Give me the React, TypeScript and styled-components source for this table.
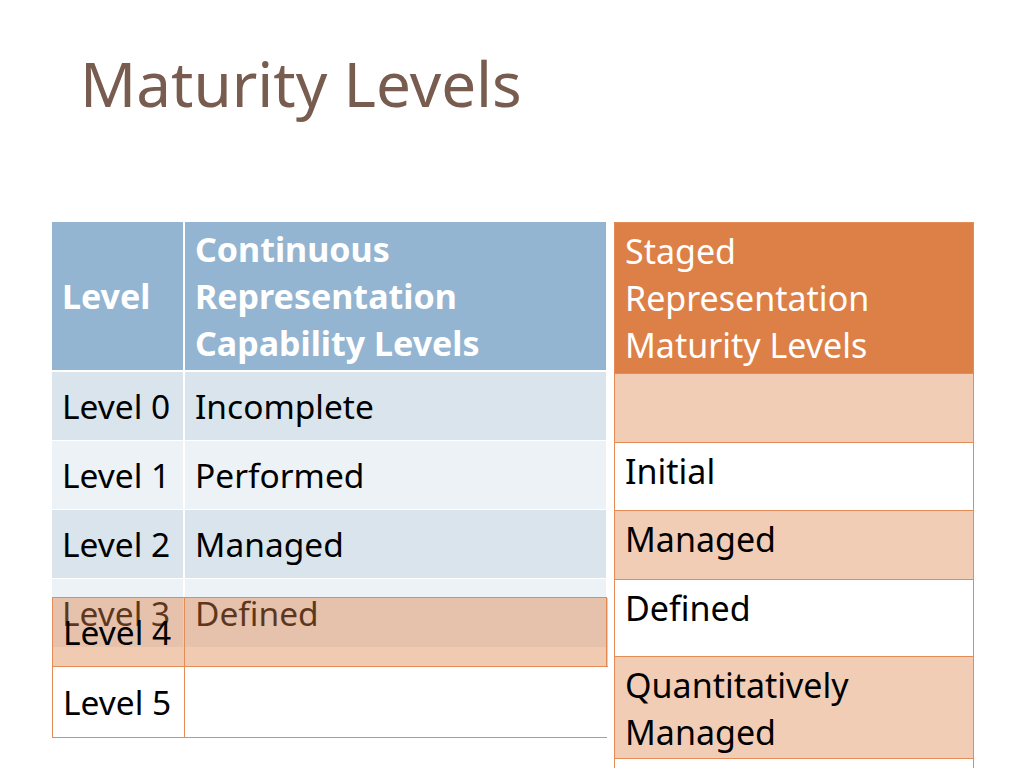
import React from "react";
import styled, { createGlobalStyle } from "styled-components";

const Global = createGlobalStyle`
  html, body { margin: 0; padding: 0; background: #ffffff; }
  body { overflow: hidden; font-family: "Noto Sans", "Open Sans", sans-serif; }
`;

const Slide = styled.div`
  position: relative;
  width: 1024px;
  height: 768px;
  overflow: hidden;
  background: #ffffff;
`;

const Title = styled.h1`
  margin: 0;
  padding: 47px 0 0 80px;
  font-size: 62px;
  line-height: 72px;
  font-weight: 400;
  color: #775c4f;
  height: 72px;
`;

const Tables = styled.div`
  display: flex;
  gap: 8px;
  padding-left: 52px;
  margin-top: 103px;
  align-items: flex-start;
`;

const BlueGrid = styled.div`
  display: grid;
  grid-template-columns: 131px 421px;
  grid-template-rows: 149px repeat(4, 68px);
  column-gap: 2px;
  row-gap: 1px;
  width: 554px;
  background: #ffffff;
  & > :nth-child(-n + 2) { margin-bottom: 1px; }
`;

const BlueCell = styled.div<{ $tone: "head" | "dark" | "light" }>`
  display: flex;
  align-items: center;
  padding: 0 10px 0 ${(p) => (p.$tone === "head" ? 10 : 10)}px;
  background: ${(p) =>
    p.$tone === "head" ? "#93b5d1" : p.$tone === "dark" ? "#d9e4ed" : "#edf2f6"};
  color: ${(p) => (p.$tone === "head" ? "#ffffff" : "#000000")};
  font-size: ${(p) => (p.$tone === "head" ? "34px" : "33.5px")};
  font-weight: ${(p) => (p.$tone === "head" ? 700 : 400)};
  line-height: 47px;
  white-space: nowrap;
`;

const OrangeTable = styled.div`
  width: 358px;
  border: 1px solid #e38c55;
  display: flex;
  flex-direction: column;
`;

const OrangeHead = styled.div`
  height: 150px;
  display: flex;
  align-items: center;
  padding: 0 10px;
  background: #dd8047;
  color: #ffffff;
  font-size: 34px;
  line-height: 47px;
`;

const OrangeRow = styled.div<{ $h: number; $tinted: boolean }>`
  height: ${(p) => p.$h}px;
  box-sizing: border-box;
  border-top: 1px solid #e38c55;
  padding: 5px 10px 0;
  background: ${(p) => (p.$tinted ? "#f2cdb6" : "#ffffff")};
  color: #000000;
  font-size: 34px;
  line-height: 47px;
`;

const Overlay = styled.div`
  position: absolute;
  left: 52px;
  top: 597px;
  width: 555px;
  display: grid;
  grid-template-columns: 132px 423px;
  grid-template-rows: 69px 70px;
  border: 1.5px solid #e38c55;
  box-sizing: border-box;
`;

const OverlayCell = styled.div<{ $tinted: boolean; $first: boolean; $top: boolean }>`
  display: flex;
  align-items: center;
  padding: 0 10px;
  background: ${(p) => (p.$tinted ? "rgba(221, 128, 71, 0.42)" : "#ffffff")};
  border-right: ${(p) => (p.$first ? "1.5px solid #e38c55" : "none")};
  border-bottom: ${(p) => (p.$top ? "1.5px solid #e38c55" : "none")};
  color: #000000;
  font-size: 33.5px;
  line-height: 47px;
  white-space: nowrap;
`;

const blueRows: [string, string][] = [
  ["Level 0", "Incomplete"],
  ["Level 1", "Performed"],
  ["Level 2", "Managed"],
  ["Level 3", "Defined"],
];

const stagedRows: { text: React.ReactNode; h: number; tinted: boolean }[] = [
  { text: "", h: 69, tinted: true },
  { text: "Initial", h: 68, tinted: false },
  { text: "Managed", h: 69, tinted: true },
  { text: "Defined", h: 77, tinted: false },
  { text: <>Quantitatively<br />Managed</>, h: 102, tinted: true },
  { text: "", h: 80, tinted: false },
];

export default function App() {
  return (
    <Slide>
      <Global />
      <Title>Maturity Levels</Title>
      <Tables>
        <BlueGrid>
          <BlueCell $tone="head">Level</BlueCell>
          <BlueCell $tone="head">
            Continuous
            <br />
            Representation
            <br />
            Capability Levels
          </BlueCell>
          {blueRows.map(([a, b], i) => (
            <React.Fragment key={a}>
              <BlueCell $tone={i % 2 === 0 ? "dark" : "light"}>{a}</BlueCell>
              <BlueCell $tone={i % 2 === 0 ? "dark" : "light"}>{b}</BlueCell>
            </React.Fragment>
          ))}
        </BlueGrid>
        <OrangeTable>
          <OrangeHead>
            Staged
            <br />
            Representation
            <br />
            Maturity Levels
          </OrangeHead>
          {stagedRows.map((r, i) => (
            <OrangeRow key={i} $h={r.h} $tinted={r.tinted}>
              {r.text}
            </OrangeRow>
          ))}
        </OrangeTable>
      </Tables>
      <Overlay>
        <OverlayCell $tinted $first $top>Level 4</OverlayCell>
        <OverlayCell $tinted $first={false} $top></OverlayCell>
        <OverlayCell $tinted={false} $first $top={false}>Level 5</OverlayCell>
        <OverlayCell $tinted={false} $first={false} $top={false}></OverlayCell>
      </Overlay>
    </Slide>
  );
}
